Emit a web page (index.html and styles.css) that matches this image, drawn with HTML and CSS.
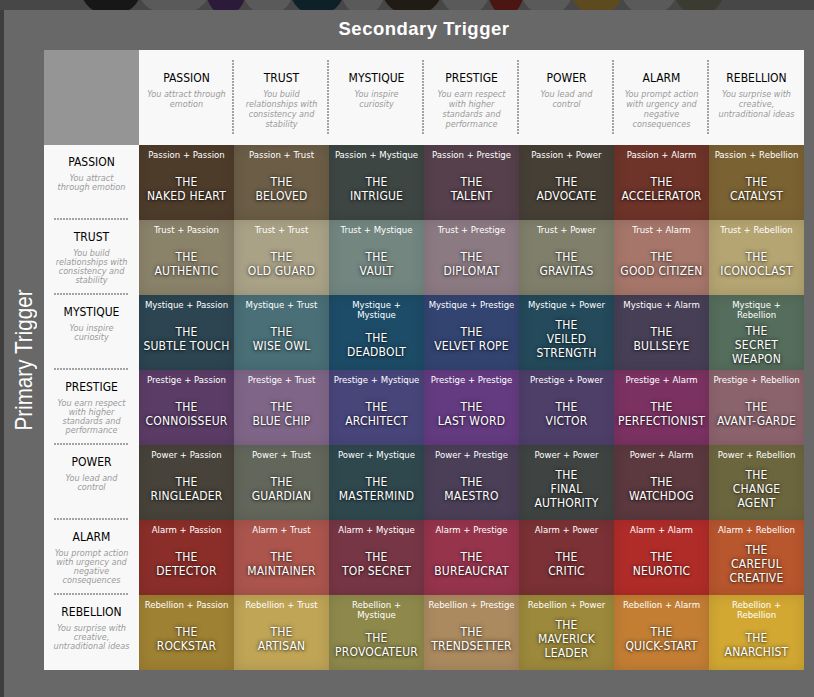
FILE: index.html
```html
<!DOCTYPE html>
<html lang="en">
<head>
<meta charset="utf-8">
<title>Trigger Matrix</title>
<link rel="stylesheet" href="styles.css">
</head>
<body>
<div class="strip">
  <svg class="strip-art" width="814" height="10" viewBox="0 0 814 10" aria-hidden="true">
    <rect x="0" y="0" width="814" height="10" fill="#474747"/>
    <ellipse cx="174" cy="-10" rx="36" ry="25" fill="#5a5a5a"/>
    <ellipse cx="268" cy="-10" rx="25" ry="25" fill="#5a5a5a"/>
    <ellipse cx="363" cy="-10" rx="22" ry="25" fill="#5a5a5a"/>
    <ellipse cx="465" cy="-10" rx="25" ry="25" fill="#5a5a5a"/>
    <ellipse cx="547" cy="-10" rx="26" ry="25" fill="#5a5a5a"/>
    <ellipse cx="649" cy="-10" rx="28" ry="25" fill="#5a5a5a"/>
    <ellipse cx="111" cy="-10" rx="30" ry="25" fill="#171717"/>
    <ellipse cx="226" cy="-10" rx="20" ry="25" fill="#2b1a3a"/>
    <ellipse cx="317" cy="-10" rx="27" ry="25" fill="#0e2028"/>
    <ellipse cx="412" cy="-10" rx="30" ry="25" fill="#201b15"/>
    <ellipse cx="506" cy="-10" rx="18" ry="25" fill="#4b1511"/>
    <ellipse cx="597" cy="-10" rx="26" ry="25" fill="#5d4a1f"/>
    <ellipse cx="699" cy="-10" rx="25" ry="25" fill="#3b3b31"/>
  </svg>
</div>
<div class="panel">
  <div class="sec-title">Secondary Trigger</div>
  <div class="panel-body">
    <div class="side"><span class="prim">Primary Trigger</span></div>
    <div class="matrix">
      <!-- header row -->
      <div class="corner"></div>
      <div class="hcell sep"><div class="htitle">PASSION</div><div class="hdesc">You attract through<br>emotion</div></div>
      <div class="hcell sep"><div class="htitle">TRUST</div><div class="hdesc">You build<br>relationships with<br>consistency and<br>stability</div></div>
      <div class="hcell sep"><div class="htitle">MYSTIQUE</div><div class="hdesc">You inspire<br>curiosity</div></div>
      <div class="hcell sep"><div class="htitle">PRESTIGE</div><div class="hdesc">You earn respect<br>with higher<br>standards and<br>performance</div></div>
      <div class="hcell sep"><div class="htitle">POWER</div><div class="hdesc">You lead and<br>control</div></div>
      <div class="hcell sep"><div class="htitle">ALARM</div><div class="hdesc">You prompt action<br>with urgency and<br>negative<br>consequences</div></div>
      <div class="hcell"><div class="htitle">REBELLION</div><div class="hdesc">You surprise with<br>creative,<br>untraditional ideas</div></div>

      <!-- row: passion -->
      <div class="rcell sep"><div class="rtitle">PASSION</div><div class="rdesc">You attract<br>through emotion</div></div>
      <div class="cell c11"><div class="lbl">Passion + Passion</div><div class="ttl">THE<br>NAKED HEART</div></div>
      <div class="cell c12"><div class="lbl">Passion + Trust</div><div class="ttl">THE<br>BELOVED</div></div>
      <div class="cell c13"><div class="lbl">Passion + Mystique</div><div class="ttl">THE<br>INTRIGUE</div></div>
      <div class="cell c14"><div class="lbl">Passion + Prestige</div><div class="ttl">THE<br>TALENT</div></div>
      <div class="cell c15"><div class="lbl">Passion + Power</div><div class="ttl">THE<br>ADVOCATE</div></div>
      <div class="cell c16"><div class="lbl">Passion + Alarm</div><div class="ttl">THE<br>ACCELERATOR</div></div>
      <div class="cell c17"><div class="lbl">Passion + Rebellion</div><div class="ttl">THE<br>CATALYST</div></div>

      <!-- row: trust -->
      <div class="rcell sep"><div class="rtitle">TRUST</div><div class="rdesc">You build<br>relationships with<br>consistency and<br>stability</div></div>
      <div class="cell c21"><div class="lbl">Trust + Passion</div><div class="ttl">THE<br>AUTHENTIC</div></div>
      <div class="cell c22"><div class="lbl">Trust + Trust</div><div class="ttl">THE<br>OLD GUARD</div></div>
      <div class="cell c23"><div class="lbl">Trust + Mystique</div><div class="ttl">THE<br>VAULT</div></div>
      <div class="cell c24"><div class="lbl">Trust + Prestige</div><div class="ttl">THE<br>DIPLOMAT</div></div>
      <div class="cell c25"><div class="lbl">Trust + Power</div><div class="ttl">THE<br>GRAVITAS</div></div>
      <div class="cell c26"><div class="lbl">Trust + Alarm</div><div class="ttl">THE<br>GOOD CITIZEN</div></div>
      <div class="cell c27"><div class="lbl">Trust + Rebellion</div><div class="ttl">THE<br>ICONOCLAST</div></div>

      <!-- row: mystique -->
      <div class="rcell sep"><div class="rtitle">MYSTIQUE</div><div class="rdesc">You inspire<br>curiosity</div></div>
      <div class="cell c31"><div class="lbl">Mystique + Passion</div><div class="ttl">THE<br>SUBTLE TOUCH</div></div>
      <div class="cell c32"><div class="lbl">Mystique + Trust</div><div class="ttl">THE<br>WISE OWL</div></div>
      <div class="cell c33"><div class="lbl">Mystique +<br>Mystique</div><div class="ttl">THE<br>DEADBOLT</div></div>
      <div class="cell c34"><div class="lbl">Mystique + Prestige</div><div class="ttl">THE<br>VELVET ROPE</div></div>
      <div class="cell c35"><div class="lbl">Mystique + Power</div><div class="ttl">THE<br>VEILED<br>STRENGTH</div></div>
      <div class="cell c36"><div class="lbl">Mystique + Alarm</div><div class="ttl">THE<br>BULLSEYE</div></div>
      <div class="cell c37"><div class="lbl">Mystique +<br>Rebellion</div><div class="ttl">THE<br>SECRET<br>WEAPON</div></div>

      <!-- row: prestige -->
      <div class="rcell sep"><div class="rtitle">PRESTIGE</div><div class="rdesc">You earn respect<br>with higher<br>standards and<br>performance</div></div>
      <div class="cell c41"><div class="lbl">Prestige + Passion</div><div class="ttl">THE<br>CONNOISSEUR</div></div>
      <div class="cell c42"><div class="lbl">Prestige + Trust</div><div class="ttl">THE<br>BLUE CHIP</div></div>
      <div class="cell c43"><div class="lbl">Prestige + Mystique</div><div class="ttl">THE<br>ARCHITECT</div></div>
      <div class="cell c44"><div class="lbl">Prestige + Prestige</div><div class="ttl">THE<br>LAST WORD</div></div>
      <div class="cell c45"><div class="lbl">Prestige + Power</div><div class="ttl">THE<br>VICTOR</div></div>
      <div class="cell c46"><div class="lbl">Prestige + Alarm</div><div class="ttl">THE<br>PERFECTIONIST</div></div>
      <div class="cell c47"><div class="lbl">Prestige + Rebellion</div><div class="ttl">THE<br>AVANT-GARDE</div></div>

      <!-- row: power -->
      <div class="rcell sep"><div class="rtitle">POWER</div><div class="rdesc">You lead and<br>control</div></div>
      <div class="cell c51"><div class="lbl">Power + Passion</div><div class="ttl">THE<br>RINGLEADER</div></div>
      <div class="cell c52"><div class="lbl">Power + Trust</div><div class="ttl">THE<br>GUARDIAN</div></div>
      <div class="cell c53"><div class="lbl">Power + Mystique</div><div class="ttl">THE<br>MASTERMIND</div></div>
      <div class="cell c54"><div class="lbl">Power + Prestige</div><div class="ttl">THE<br>MAESTRO</div></div>
      <div class="cell c55"><div class="lbl">Power + Power</div><div class="ttl">THE<br>FINAL<br>AUTHORITY</div></div>
      <div class="cell c56"><div class="lbl">Power + Alarm</div><div class="ttl">THE<br>WATCHDOG</div></div>
      <div class="cell c57"><div class="lbl">Power + Rebellion</div><div class="ttl">THE<br>CHANGE<br>AGENT</div></div>

      <!-- row: alarm -->
      <div class="rcell sep"><div class="rtitle">ALARM</div><div class="rdesc">You prompt action<br>with urgency and<br>negative<br>consequences</div></div>
      <div class="cell c61"><div class="lbl">Alarm + Passion</div><div class="ttl">THE<br>DETECTOR</div></div>
      <div class="cell c62"><div class="lbl">Alarm + Trust</div><div class="ttl">THE<br>MAINTAINER</div></div>
      <div class="cell c63"><div class="lbl">Alarm + Mystique</div><div class="ttl">THE<br>TOP SECRET</div></div>
      <div class="cell c64"><div class="lbl">Alarm + Prestige</div><div class="ttl">THE<br>BUREAUCRAT</div></div>
      <div class="cell c65"><div class="lbl">Alarm + Power</div><div class="ttl">THE<br>CRITIC</div></div>
      <div class="cell c66"><div class="lbl">Alarm + Alarm</div><div class="ttl">THE<br>NEUROTIC</div></div>
      <div class="cell c67"><div class="lbl">Alarm + Rebellion</div><div class="ttl">THE<br>CAREFUL<br>CREATIVE</div></div>

      <!-- row: rebellion -->
      <div class="rcell"><div class="rtitle">REBELLION</div><div class="rdesc">You surprise with<br>creative,<br>untraditional ideas</div></div>
      <div class="cell c71"><div class="lbl">Rebellion + Passion</div><div class="ttl">THE<br>ROCKSTAR</div></div>
      <div class="cell c72"><div class="lbl">Rebellion + Trust</div><div class="ttl">THE<br>ARTISAN</div></div>
      <div class="cell c73"><div class="lbl">Rebellion +<br>Mystique</div><div class="ttl">THE<br>PROVOCATEUR</div></div>
      <div class="cell c74"><div class="lbl">Rebellion + Prestige</div><div class="ttl">THE<br>TRENDSETTER</div></div>
      <div class="cell c75"><div class="lbl">Rebellion + Power</div><div class="ttl">THE<br>MAVERICK<br>LEADER</div></div>
      <div class="cell c76"><div class="lbl">Rebellion + Alarm</div><div class="ttl">THE<br>QUICK-START</div></div>
      <div class="cell c77"><div class="lbl">Rebellion +<br>Rebellion</div><div class="ttl">THE<br>ANARCHIST</div></div>
    </div>
  </div>
</div>
</body>
</html>
```

FILE: styles.css
```css
* { box-sizing: border-box; }

html, body {
  margin: 0;
  padding: 0;
}

body {
  background: #3e3e3e;
  font-family: "Liberation Sans", Arial, sans-serif;
  width: 814px;
  height: 697px;
  overflow: hidden;
}

.strip {
  height: 10px;
  overflow: hidden;
}

.strip-art {
  display: block;
}

.panel {
  margin-left: 4px;
  width: 810px;
  height: 687px;
  background: #686868;
}

.sec-title {
  margin-left: 40px;
  width: 760px;
  height: 40px;
  padding-bottom: 3px;
  line-height: 37px;
  text-align: center;
  color: #ffffff;
  font-family: "Liberation Sans", Arial, sans-serif;
  font-weight: bold;
  font-size: 18.5px;
  letter-spacing: 0.5px;
}

.panel-body {
  display: flex;
}

.side {
  width: 40px;
  display: flex;
  align-items: center;
  justify-content: center;
}

.prim {
  writing-mode: vertical-rl;
  transform: rotate(180deg) scale(1, 0.86);
  font-family: "Liberation Sans", Arial, sans-serif;
  font-size: 24px;
  line-height: 30px;
  color: #ffffff;
  white-space: nowrap;
}

.matrix {
  display: grid;
  grid-template-columns: repeat(8, 95px);
  grid-template-rows: 95px repeat(7, 75px);
  font-family: "DejaVu Sans Condensed", "DejaVu Sans", sans-serif;
  font-stretch: condensed;
}

.corner {
  background: #959595;
}

.hcell {
  background-color: #f8f8f8;
  padding-top: 21px;
  text-align: center;
}

.hcell.sep {
  background-image: repeating-linear-gradient(to bottom, #a3a3a3 0 2px, transparent 2px 3px);
  background-size: 2px 75px;
  background-position: right 0 top 10px;
  background-repeat: no-repeat;
}

.htitle,
.rtitle {
  font-size: 12px;
  line-height: 14px;
  color: #000000;
}

.hdesc {
  margin-top: 4px;
  font-size: 9px;
  line-height: 10px;
  font-style: italic;
  color: #9a9a9a;
  white-space: nowrap;
}

.rcell {
  background-color: #f8f8f8;
  padding-top: 10px;
  text-align: center;
}

.rcell.sep {
  background-image: repeating-linear-gradient(to right, #a3a3a3 0 2px, transparent 2px 3px);
  background-size: 75px 2px;
  background-position: left 10px bottom 0;
  background-repeat: no-repeat;
}

.rdesc {
  margin-top: 5px;
  font-size: 9px;
  line-height: 9px;
  font-style: italic;
  color: #9a9a9a;
  white-space: nowrap;
}

.cell {
  display: flex;
  flex-direction: column;
  align-items: center;
  text-align: center;
  color: #ffffff;
  box-shadow: inset 0 0 14px rgba(0, 0, 0, 0.12);
}

.lbl {
  padding-top: 5px;
  font-size: 9.5px;
  line-height: 10px;
  white-space: nowrap;
}

.ttl {
  height: 57px;
  display: flex;
  flex-direction: column;
  justify-content: center;
  font-size: 12px;
  line-height: 14px;
  white-space: nowrap;
  letter-spacing: 0.2px;
  text-shadow: 0 0 4px rgba(0, 0, 0, 0.7), 0 1px 2px rgba(0, 0, 0, 0.4);
}

/* row 1: passion */
.c11 { background-color: #4e3c2b; }
.c12 { background-color: #6b5d46; }
.c13 { background-color: #3d4643; }
.c14 { background-color: #55404b; }
.c15 { background-color: #463f36; }
.c16 { background-color: #6e3429; }
.c17 { background-color: #7b6233; }

/* row 2: trust */
.c21 { background-color: #8b826a; }
.c22 { background-color: #a9a287; }
.c23 { background-color: #738680; }
.c24 { background-color: #8c7a83; }
.c25 { background-color: #7f7f6b; }
.c26 { background-color: #a6766a; }
.c27 { background-color: #b5a572; }

/* row 3: mystique */
.c31 { background-color: #2c4551; }
.c32 { background-color: #4a6f77; }
.c33 { background-color: #1d4c68; }
.c34 { background-color: #334471; }
.c35 { background-color: #244a5b; }
.c36 { background-color: #473f55; }
.c37 { background-color: #556d5c; }

/* row 4: prestige */
.c41 { background-color: #5b3c66; }
.c42 { background-color: #7f6688; }
.c43 { background-color: #48457b; }
.c44 { background-color: #643b81; }
.c45 { background-color: #4e3f69; }
.c46 { background-color: #7b3262; }
.c47 { background-color: #8b636c; }

/* row 5: power */
.c51 { background-color: #47433a; }
.c52 { background-color: #63665b; }
.c53 { background-color: #2f484e; }
.c54 { background-color: #4a3f57; }
.c55 { background-color: #3f4443; }
.c56 { background-color: #5b393e; }
.c57 { background-color: #6c663f; }

/* row 6: alarm */
.c61 { background-color: #8b2e29; }
.c62 { background-color: #ab554d; }
.c63 { background-color: #773645; }
.c64 { background-color: #96344c; }
.c65 { background-color: #7b3135; }
.c66 { background-color: #b02c29; }
.c67 { background-color: #b8562e; }

/* row 7: rebellion */
.c71 { background-color: #9f8133; }
.c72 { background-color: #c0a557; }
.c73 { background-color: #8e894b; }
.c74 { background-color: #ab8a5f; }
.c75 { background-color: #9c893b; }
.c76 { background-color: #c37e34; }
.c77 { background-color: #d2a833; }
```
